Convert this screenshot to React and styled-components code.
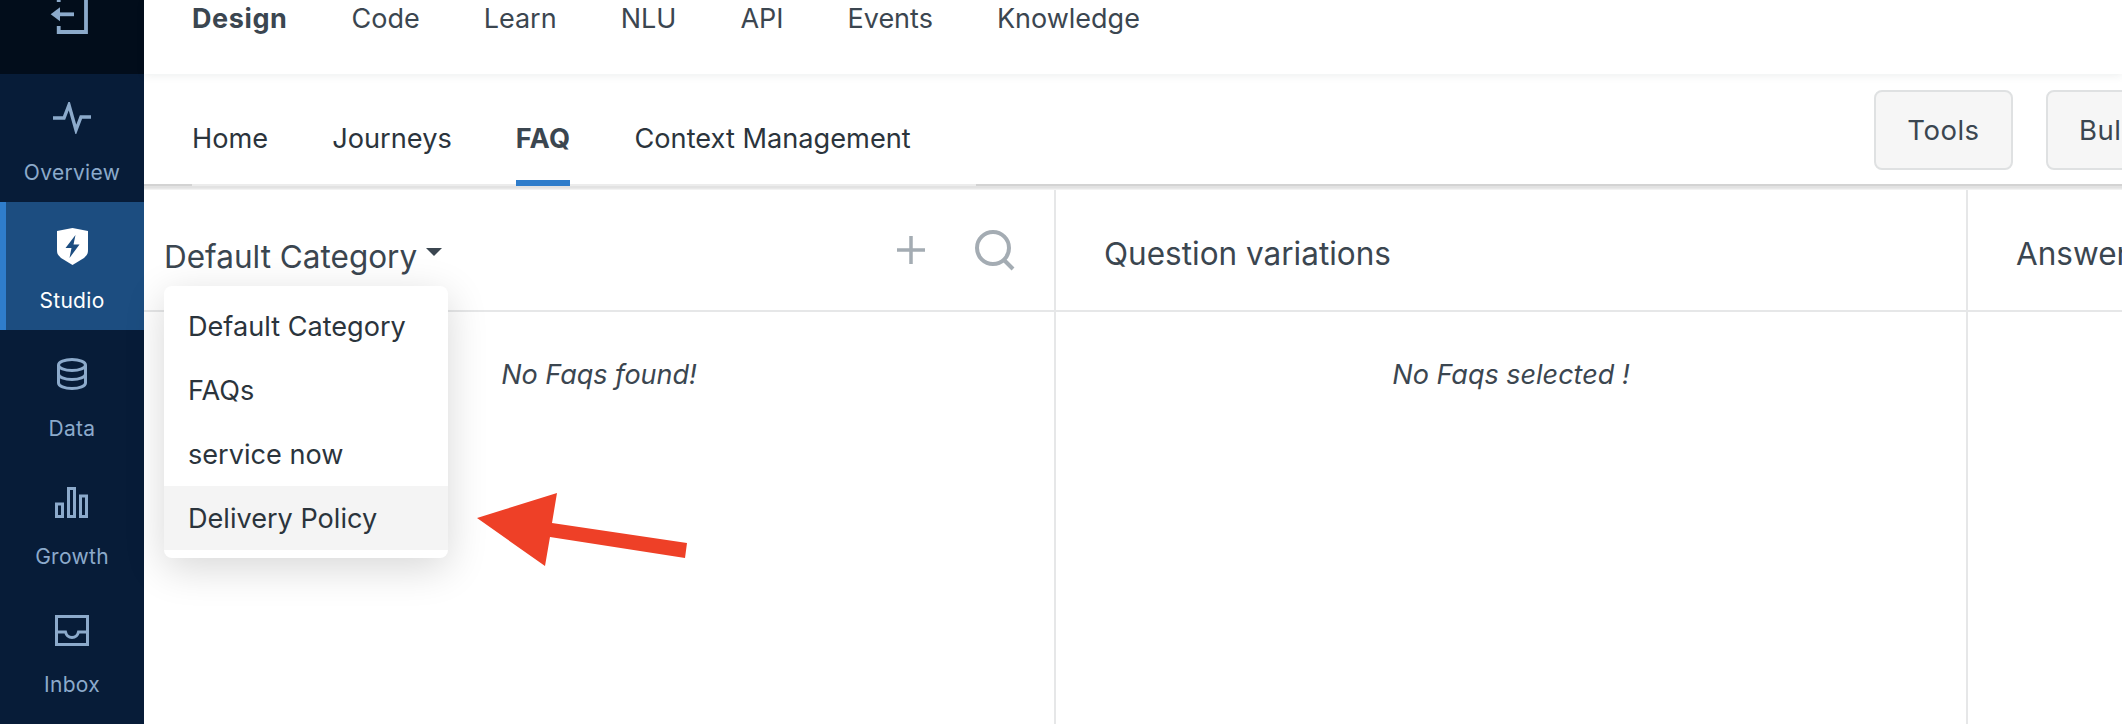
import React from 'react';
import styled, { createGlobalStyle } from 'styled-components';

const GlobalStyle = createGlobalStyle`
  html, body {
    margin: 0;
    width: 2122px;
    height: 724px;
    overflow: hidden;
    background: #fff;
    font-family: Inter, "Liberation Sans", sans-serif;
  }
`;

const Page = styled.div`
  position: relative;
  display: flex;
  width: 2122px;
  height: 724px;
  overflow: hidden;
`;

const Sidebar = styled.aside`
  width: 144px;
  flex-shrink: 0;
  background: #071c38;
`;

const SideTop = styled.div`
  height: 74px;
  background: #020d1b;
  display: flex;
  justify-content: center;
  align-items: flex-start;
  color: #8caacb;
`;

const SideItem = styled.div`
  height: 128px;
  box-sizing: border-box;
  display: flex;
  flex-direction: column;
  align-items: center;
  padding-top: 22px;
  background: ${(p) => (p.$active ? '#1c4d80' : 'transparent')};
  border-left: ${(p) => (p.$active ? '6px solid #2f7dcb' : 'none')};
  padding-right: ${(p) => (p.$active ? '6px' : '0')};
  color: ${(p) => (p.$active ? '#fff' : '#8caacb')};
`;

const SideIcon = styled.div`
  height: 44px;
  display: flex;
  align-items: center;
  justify-content: center;
`;

const SideLabel = styled.span`
  margin-top: 19px;
  font-size: 21px;
  line-height: 28px;
  letter-spacing: 0.3px;
`;

const Main = styled.main`
  flex: 1;
  display: flex;
  flex-direction: column;
  min-width: 0;
`;

const TopNav = styled.nav`
  height: 74px;
  flex-shrink: 0;
  box-sizing: border-box;
  display: flex;
  gap: 64px;
  padding: 3px 0 0 48px;
  background: #fff;
  box-shadow: 0 2px 8px rgba(40, 60, 70, 0.08);
  position: relative;
  z-index: 2;
`;

const TopLink = styled.span`
  font-size: 27px;
  line-height: 32px;
  font-weight: ${(p) => (p.$bold ? 700 : 400)};
  letter-spacing: ${(p) => (p.$bold ? '0.6px' : '0')};
  color: #3b4650;
`;

const SubNav = styled.div`
  height: 112px;
  flex-shrink: 0;
  box-sizing: border-box;
  display: flex;
  justify-content: space-between;
  position: relative;
  z-index: 1;
  background: #fff;
  border-bottom: 2px solid #d3d3d3;
  box-shadow: 0 1px 0 #e2e2e2, 0 2px 0 #e2e2e2, 0 3px 0 #e8e8e8, 0 4px 0 #f2f2f2;
`;

const Tabs = styled.div`
  display: flex;
  gap: 64px;
  width: 784px;
  padding-left: 48px;
  height: 110px;
  position: relative;

  &::after {
    content: '';
    position: absolute;
    left: 48px;
    right: 0;
    bottom: -2px;
    height: 2px;
    background: #ececec;
  }
`;

const Tab = styled.span`
  height: 112px;
  box-sizing: border-box;
  padding-top: 48px;
  font-size: 27.2px;
  line-height: 34px;
  font-weight: ${(p) => (p.$active ? 700 : 400)};
  letter-spacing: ${(p) => (p.$active ? '0.3px' : '0')};
  color: ${(p) => (p.$active ? '#3b4650' : '#2b343c')};
  border-bottom: ${(p) => (p.$active ? '6px solid #2f7dcb' : 'none')};
  position: relative;
  z-index: 1;
`;

const Actions = styled.div`
  display: flex;
  gap: 33px;
  padding-top: 16px;
  width: 248px;
  overflow: hidden;
  flex-shrink: 0;
`;

const ToolButton = styled.button`
  width: 139px;
  height: 80px;
  flex-shrink: 0;
  box-sizing: border-box;
  border: 2px solid #dfe1e2;
  border-radius: 8px;
  background: #f6f6f6;
  font-family: inherit;
  font-size: 27.5px;
  letter-spacing: 0.5px;
  color: #3b4650;
  padding: 0;
  text-align: ${(p) => (p.$clip ? 'left' : 'center')};
  padding-left: ${(p) => (p.$clip ? '31px' : '0')};
`;

const Columns = styled.div`
  flex: 1;
  display: grid;
  grid-template-columns: 912px 912px 1fr;
`;

const Column = styled.section`
  position: relative;
  border-right: 2px solid #e6e7e8;
  &:last-child {
    border-right: none;
  }
`;

const ColumnHead = styled.header`
  height: 126px;
  box-sizing: border-box;
  display: flex;
  align-items: center;
  justify-content: space-between;
  padding: 11px 38px 0 ${(p) => p.$left || 48}px;
  border-bottom: 2px solid #e6e7e8;
  font-size: 31.5px;
  color: #3b4650;
`;

const CategoryTitle = styled.span`
  margin-top: 5px;
`;

const Caret = styled.span`
  display: inline-block;
  width: 0;
  height: 0;
  margin: 0 0 12px 9px;
  border-left: 8.5px solid transparent;
  border-right: 8.5px solid transparent;
  border-top: 8px solid #3b4650;
`;

const HeadIcons = styled.div`
  display: flex;
  align-items: center;
  gap: 49px;
  color: #a4acb3;
  margin-top: -8px;
`;

const EmptyNote = styled.p`
  margin: 46px 0 0;
  font-size: 27px;
  line-height: 34px;
  font-style: italic;
  text-align: center;
  color: #3b4650;
`;

const Menu = styled.ul`
  position: absolute;
  left: 20px;
  top: 100px;
  width: 284px;
  height: 272px;
  box-sizing: border-box;
  margin: 0;
  padding: 8px 0;
  list-style: none;
  background: #fff;
  border-radius: 8px;
  box-shadow: 0 10px 40px rgba(0, 0, 0, 0.16);
`;

const MenuItem = styled.li`
  height: 64px;
  box-sizing: border-box;
  padding: 0 24px;
  display: flex;
  align-items: center;
  font-size: 27.1px;
  color: #2b343c;
  background: ${(p) => (p.$hover ? '#f4f4f4' : 'transparent')};
`;

const Arrow = styled.svg`
  position: absolute;
  left: 470px;
  top: 485px;
`;

const navItems = ['Design', 'Code', 'Learn', 'NLU', 'API', 'Events', 'Knowledge'];
const tabs = ['Home', 'Journeys', 'FAQ', 'Context Management'];
const categories = ['Default Category', 'FAQs', 'service now', 'Delivery Policy'];

const PulseIcon = () => (
  <svg width="38" height="32" viewBox="0 0 38 32" fill="none" stroke="currentColor" strokeWidth="3.4">
    <path d="M0 16h11l5-13 7 25 5-13h10" />
  </svg>
);

const ShieldIcon = () => (
  <svg width="31" height="37" viewBox="0 0 31 37">
    <path d="M15.5 0 31 3v19c0 4-1 5-4 8l-11.500 7L4 30c-3-3-4-4-4-8V3z" fill="#fff" />
    <path d="M18.500 7 8.500 20h6l-2 10 10-13.500h-6z" fill="#1c4d80" />
  </svg>
);

const DataIcon = () => (
  <svg width="32" height="32" viewBox="0 0 32 32" fill="none" stroke="currentColor" strokeWidth="3">
    <ellipse cx="16" cy="7" rx="13.500" ry="5.500" />
    <path d="M2.500 7v18c0 3 6 5.500 13.500 5.500S29.500 28 29.500 25V7" />
    <path d="M2.500 16c0 3 6 5.500 13.500 5.500S29.500 19 29.500 16" />
  </svg>
);

const GrowthIcon = () => (
  <svg width="34" height="31" viewBox="0 0 34 31" fill="none" stroke="currentColor" strokeWidth="3">
    <rect x="1.500" y="17" width="6" height="12.500" />
    <rect x="13.500" y="1.500" width="6" height="28" />
    <rect x="25.500" y="9" width="6" height="20.500" />
  </svg>
);

const InboxIcon = () => (
  <svg width="34" height="31" viewBox="0 0 34 31" fill="none" stroke="currentColor" strokeWidth="3">
    <rect x="1.500" y="1.500" width="31" height="28" />
    <path d="M1.500 17h9c1 4 3 5.500 6.500 5.500s5.500-1.500 6.500-5.500h9" />
  </svg>
);

const LogoutIcon = () => (
  <svg width="44" height="34" viewBox="0 0 44 34" fill="none" stroke="currentColor" strokeWidth="3.8">
    <path d="M8.700 -5V2M36 -5V32H8.700v-6" />
    <path d="M24 14.300H8" />
    <path d="M0.700 14.300 10 7.300v14z" fill="currentColor" stroke="none" />
  </svg>
);

const sideItems = [
  { label: 'Overview', icon: <PulseIcon /> },
  { label: 'Studio', icon: <ShieldIcon />, active: true },
  { label: 'Data', icon: <DataIcon /> },
  { label: 'Growth', icon: <GrowthIcon /> },
  { label: 'Inbox', icon: <InboxIcon /> },
];

export default function App() {
  return (
    <>
      <GlobalStyle />
      <Page>
        <Sidebar>
          <SideTop>
            <LogoutIcon />
          </SideTop>
          {sideItems.map((item) => (
            <SideItem key={item.label} $active={item.active}>
              <SideIcon>{item.icon}</SideIcon>
              <SideLabel>{item.label}</SideLabel>
            </SideItem>
          ))}
        </Sidebar>
        <Main>
          <TopNav>
            {navItems.map((name, i) => (
              <TopLink key={name} $bold={i === 0}>{name}</TopLink>
            ))}
          </TopNav>
          <SubNav>
            <Tabs>
              {tabs.map((name) => (
                <Tab key={name} $active={name === 'FAQ'}>{name}</Tab>
              ))}
            </Tabs>
            <Actions>
              <ToolButton>Tools</ToolButton>
              <ToolButton $clip>Bulk</ToolButton>
            </Actions>
          </SubNav>
          <Columns>
            <Column>
              <ColumnHead $left={20}>
                <CategoryTitle>Default Category<Caret /></CategoryTitle>
                <HeadIcons>
                  <svg width="28" height="28" viewBox="0 0 28 28" stroke="currentColor" strokeWidth="3.500">
                    <path d="M14 0v28M0 14h28" />
                  </svg>
                  <svg width="42" height="42" viewBox="0 0 42 42" fill="none" stroke="currentColor" strokeWidth="4">
                    <circle cx="19" cy="19" r="16" />
                    <path d="M30 31l9 9" />
                  </svg>
                </HeadIcons>
              </ColumnHead>
              <EmptyNote>No Faqs found!</EmptyNote>
              <Menu>
                {categories.map((name) => (
                  <MenuItem key={name} $hover={name === 'Delivery Policy'}>{name}</MenuItem>
                ))}
              </Menu>
            </Column>
            <Column>
              <ColumnHead>Question variations</ColumnHead>
              <EmptyNote>No Faqs selected !</EmptyNote>
            </Column>
            <Column>
              <ColumnHead>Answers</ColumnHead>
            </Column>
          </Columns>
        </Main>
        <Arrow width="220" height="85" viewBox="470 485 220 85">
          <path d="M477 518 557 493 552 523 687 543 685 558 550 537 545 566Z" fill="#ee4027" />
        </Arrow>
      </Page>
    </>
  );
}
